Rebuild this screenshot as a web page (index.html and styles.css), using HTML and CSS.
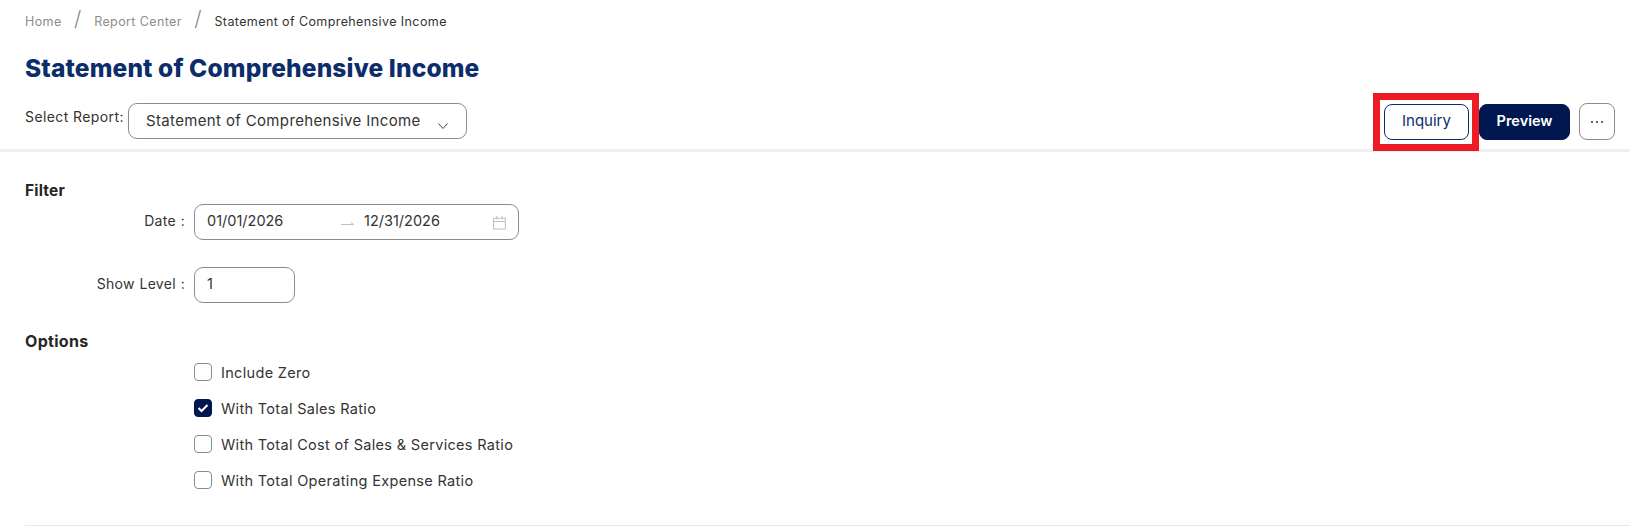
FILE: index.html
```html
<!DOCTYPE html>
<html lang="en">
<head>
<meta charset="utf-8">
<title>Statement of Comprehensive Income</title>
<link rel="stylesheet" href="styles.css">
</head>
<body>
<header class="head">
  <nav class="crumbs">
    <span class="crumb">Home</span><span class="sep">/</span>
    <span class="crumb">Report Center</span><span class="sep">/</span>
    <span class="crumb current">Statement of Comprehensive Income</span>
  </nav>
  <h1 class="title">Statement of Comprehensive Income</h1>
  <div class="toolbar">
    <div class="report-select">
      <span class="select-label">Select Report:</span>
      <div class="select-box">
        <span>Statement of Comprehensive Income</span>
        <svg class="chev" width="12" height="8" viewBox="0 0 12 8"><path d="M1.5 1.5 6 6.5l4.5-5" fill="none" stroke="#444" stroke-width="1"/></svg>
      </div>
    </div>
    <div class="actions">
      <div class="inquiry-wrap">
        <button class="btn btn-outline">Inquiry</button>
        <span class="highlight"></span>
      </div>
      <button class="btn btn-primary">Preview</button>
      <button class="btn btn-more" aria-label="More">
        <svg width="14" height="4" viewBox="0 0 14 4"><circle cx="2" cy="2" r="1" fill="#333"/><circle cx="7" cy="2" r="1" fill="#333"/><circle cx="12" cy="2" r="1" fill="#333"/></svg>
      </button>
    </div>
  </div>
</header>
<main class="content">
  <h2 class="section-title first">Filter</h2>
  <div class="form-row date-row">
    <label class="field-label">Date :</label>
    <div class="input date-input">
      <span class="date-from">01/01/2026</span>
      <svg class="arrow" width="14" height="6" viewBox="0 0 14 6"><path d="M0 4.5h12.5L9.5 2" fill="none" stroke="#bdbdbd" stroke-width="1"/></svg>
      <span class="date-to">12/31/2026</span>
      <svg class="cal" width="15" height="15" viewBox="0 0 14 14"><path d="M1.5 3h11v10h-11zM1.5 6h11M4.5 1v3M9.5 1v3" fill="none" stroke="#bfbfbf" stroke-width="1"/></svg>
    </div>
  </div>
  <div class="form-row level-row">
    <label class="field-label">Show Level :</label>
    <div class="input level-input">1</div>
  </div>
  <h2 class="section-title options">Options</h2>
  <ul class="checks">
    <li class="check"><span class="box"></span>Include Zero</li>
    <li class="check"><span class="box on"><svg width="12" height="10" viewBox="0 0 12 10"><path d="M1.5 5 4.5 8l6-6" fill="none" stroke="#fff" stroke-width="2"/></svg></span>With Total Sales Ratio</li>
    <li class="check"><span class="box"></span>With Total Cost of Sales &amp; Services Ratio</li>
    <li class="check"><span class="box"></span>With Total Operating Expense Ratio</li>
  </ul>
  <hr class="rule">
</main>
</body>
</html>
```
FILE: styles.css
```css
* { box-sizing: border-box; }
html, body { margin: 0; padding: 0; }
body {
  width: 1630px;
  height: 526px;
  overflow: hidden;
  background: #fff;
  color: #333;
  font-family: Inter, "Open Sans", "Liberation Sans", sans-serif;
  font-size: 14px;
}
.head {
  height: 152px;
  border-bottom: 3px solid #f0f0f0;
  padding: 0 15px 0 25px;
}
.crumbs {
  height: 42px;
  display: flex;
  align-items: center;
  font-size: 12.5px;
  letter-spacing: 0.4px;
  color: #8c8c8c;
}
.sep {
  width: 32.5px;
  text-align: center;
  font-size: 21px;
  font-weight: 300;
  margin-top: -6px;
}
.crumb.current { color: #333; }
.title {
  margin: 0;
  height: 50px;
  line-height: 52px;
  font-size: 24.5px;
  letter-spacing: 0.15px;
  font-weight: 800;
  color: #0b2e6b;
}
.toolbar {
  display: flex;
  justify-content: space-between;
  align-items: flex-start;
  margin-top: 11px;
}
.report-select { display: flex; align-items: flex-start; }
.select-label { line-height: 28px; width: 103px; font-size: 14px; letter-spacing: 0.4px; }
.select-box {
  width: 339px;
  height: 36px;
  border: 1px solid #8c8c8c;
  border-radius: 9px;
  padding: 0 17px 2px;
  display: flex;
  align-items: center;
  justify-content: space-between;
  font-size: 15px;
  letter-spacing: 0.35px;
}
.chev { margin-top: 11px; margin-right: 0; }
.actions { display: flex; align-items: flex-start; margin-top: 1px; }
.inquiry-wrap { position: relative; }
.btn {
  height: 36px;
  border-radius: 8px;
  font-family: inherit;
  font-size: 14.5px;
  padding: 0 0 3px;
  display: flex;
  align-items: center;
  justify-content: center;
}
.btn-outline {
  width: 85px;
  background: #fff;
  color: #0b2e6b;
  border: 1px solid #0b2e6b;
  font-size: 15px;
}
.highlight {
  position: absolute;
  left: -11px;
  top: -11px;
  width: 106px;
  height: 58px;
  border: 7px solid #ed1c24;
}
.btn-primary {
  width: 91px;
  margin-left: 10px;
  background: #00174f;
  color: #fff;
  font-weight: 600;
  border: 1px solid #00174f;
}
.btn-more {
  width: 36px;
  height: 37px;
  margin: -1px 0 0 9px;
  padding: 0;
  background: #fff;
  border: 1px solid #8c8c8c;
}
.content { padding: 0 0 0 25px; }
.section-title {
  margin: 0;
  font-size: 15.5px;
  letter-spacing: 0.2px;
  font-weight: 700;
  color: #262626;
  line-height: 20px;
}
.section-title.first { margin-top: 29px; }
.form-row { display: flex; align-items: center; }
.date-row { margin-top: 3px; }
.level-row { margin-top: 27px; }
.field-label {
  width: 160px;
  padding-bottom: 4px;
  text-align: right;
  font-size: 14px;
  letter-spacing: 0.3px;
  word-spacing: 0.5px;
}
.input {
  height: 36px;
  margin-left: 9px;
  border: 1px solid #8c8c8c;
  border-radius: 9px;
  display: flex;
  align-items: center;
  padding: 0 0 3px 12px;
  font-size: 14.5px;
}
.date-input { width: 325px; }
.date-from { width: 134px; }
.arrow { margin-right: 9px; margin-top: 5px; }
.date-to { width: 128px; }
.cal { margin-top: 3px; }
.level-input { width: 101px; }
.section-title.options { margin-top: 28px; font-size: 16px; letter-spacing: 0.3px; }
.checks { list-style: none; margin: 3px 0 0 169px; padding: 0; }
.check {
  height: 36px;
  display: flex;
  align-items: center;
  gap: 9px;
  font-size: 14.5px;
  letter-spacing: 0.32px;
}
.box {
  width: 18px;
  height: 18px;
  border: 1px solid #8c8c8c;
  border-radius: 4px;
  display: flex;
  align-items: center;
  justify-content: center;
}
.box.on { background: #00174f; border-color: #00174f; }
.rule {
  margin: 27px 0 0;
  border: 0;
  border-top: 1px solid #e8e8e8;
}
```
